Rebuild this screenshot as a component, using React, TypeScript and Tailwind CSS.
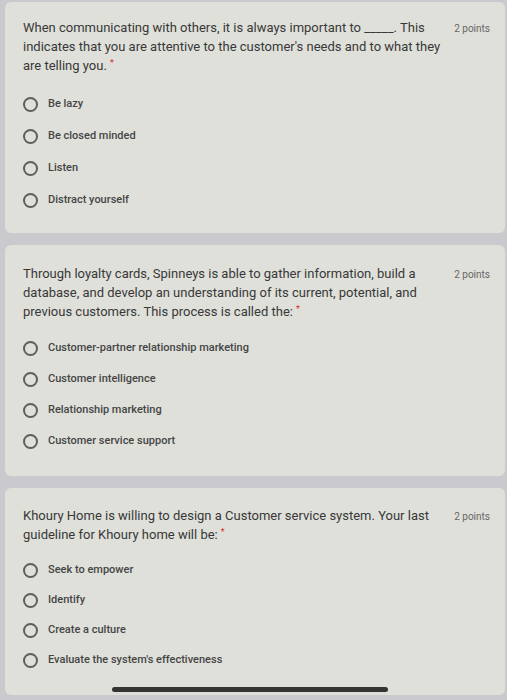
const questions = [
  {
    text: (
      <>
        When communicating with others, it is always important to _____. This indicates that you are attentive to the
        customer's needs and to what they are telling you.
      </>
    ),
    options: ["Be lazy", "Be closed minded", "Listen", "Distract yourself"],
    pad: "pt-[16px] pb-[17px]",
    list: "mt-[13px]",
    row: "h-[32px]",
  },
  {
    text: (
      <>
        Through loyalty cards, Spinneys is able to gather information, build a database, and develop an understanding
        of its current, potential, and previous customers. This process is called the:
      </>
    ),
    options: [
      "Customer-partner relationship marketing",
      "Customer intelligence",
      "Relationship marketing",
      "Customer service support",
    ],
    pad: "pt-[19px] pb-[19px]",
    list: "mt-[12px]",
    row: "h-[31px]",
  },
  {
    text: <>Khoury Home is willing to design a Customer service system. Your last guideline for Khoury home will be:</>,
    options: ["Seek to empower", "Identify", "Create a culture", "Evaluate the system's effectiveness"],
    pad: "pt-[18px] h-[207px]",
    list: "mt-[11px]",
    row: "h-[30px]",
  },
];

function Radio({ label, row }: { label: string; row: string }) {
  return (
    <div className={`flex items-center ${row}`}>
      <span className="w-[15px] h-[15px] rounded-full border-2 border-[#5e5e5e] shrink-0" />
      <span className="ml-[10px] text-[11px] font-medium text-[#454545]">{label}</span>
    </div>
  );
}

function Card({ q }: { q: (typeof questions)[number] }) {
  return (
    <div className={`bg-[#dfe0da] rounded-md pl-[18px] pr-[15px] ${q.pad}`}>
      <div className="flex items-start">
        <p className="w-[428px] text-[13px] leading-[19px] text-[#383838]">
          {q.text}
          <span className="ml-[3px] align-top text-[9px] leading-[14px] text-[#d93025]">*</span>
        </p>
        <span className="ml-auto mt-[3px] text-[10px] text-[#666]">2 points</span>
      </div>
      <div className={q.list}>
        {q.options.map((o) => (
          <Radio key={o} label={o} row={q.row} />
        ))}
      </div>
    </div>
  );
}

export default function App() {
  return (
    <div
      className="relative w-[507px] h-[700px] overflow-hidden bg-[#c9c9ce] pt-[2px] pl-[5px] pr-[2px]"
      style={{ fontFamily: "Roboto, 'Noto Sans', sans-serif" }}
    >
      <div className="flex flex-col gap-[12px]">
        {questions.map((q, i) => (
          <Card key={i} q={q} />
        ))}
      </div>
      <div className="absolute left-[112px] bottom-[8px] w-[276px] h-[5px] rounded-full bg-[#343434]" />
    </div>
  );
}
